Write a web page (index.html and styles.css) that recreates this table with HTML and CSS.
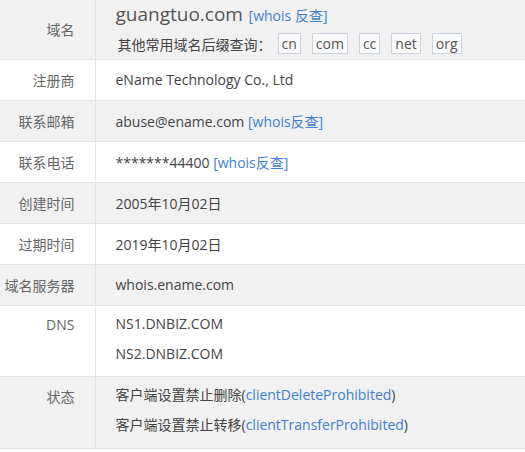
FILE: index.html
```html
<!DOCTYPE html>
<html lang="zh-CN">
<head>
  <meta charset="UTF-8">
  <title>guangtuo.com whois</title>
  <link rel="stylesheet" href="styles.css">
</head>
<body>
  <table class="whois">
    <tr class="row-gray row-domain">
      <th>域名</th>
      <td>
        <div class="domain-line">
          <span class="domain-name">guangtuo.com</span>
          <a class="link" href="#">[whois 反查]</a>
        </div>
        <div class="suffix-line">
          <span class="suffix-label">其他常用域名后缀查询：</span>
          <a class="suffix" href="#">cn</a>
          <a class="suffix" href="#">com</a>
          <a class="suffix" href="#">cc</a>
          <a class="suffix" href="#">net</a>
          <a class="suffix" href="#">org</a>
        </div>
      </td>
    </tr>
    <tr>
      <th>注册商</th>
      <td>eName Technology Co., Ltd</td>
    </tr>
    <tr class="row-gray">
      <th>联系邮箱</th>
      <td>abuse@ename.com <a class="link" href="#">[whois反查]</a></td>
    </tr>
    <tr>
      <th>联系电话</th>
      <td>*******44400 <a class="link" href="#">[whois反查]</a></td>
    </tr>
    <tr class="row-gray">
      <th>创建时间</th>
      <td>2005年10月02日</td>
    </tr>
    <tr>
      <th>过期时间</th>
      <td>2019年10月02日</td>
    </tr>
    <tr class="row-gray">
      <th>域名服务器</th>
      <td>whois.ename.com</td>
    </tr>
    <tr class="row-multi">
      <th>DNS</th>
      <td>
        <div class="line">NS1.DNBIZ.COM</div>
        <div class="line">NS2.DNBIZ.COM</div>
      </td>
    </tr>
    <tr class="row-gray row-multi row-last">
      <th>状态</th>
      <td>
        <div class="line">客户端设置禁止删除(<a class="link" href="#">clientDeleteProhibited</a>)</div>
        <div class="line">客户端设置禁止转移(<a class="link" href="#">clientTransferProhibited</a>)</div>
      </td>
    </tr>
  </table>
</body>
</html>
```

FILE: styles.css
```css
* {
  margin: 0;
  padding: 0;
  box-sizing: border-box;
}

body {
  background: #fff;
  font-family: "Open Sans", "Noto Sans CJK SC", sans-serif;
  font-size: 14px;
  color: #444;
}

.whois {
  width: 525px;
  border-collapse: collapse;
}

.whois tr {
  border-bottom: 1px solid #e3e3e3;
}

.whois tr.row-gray {
  background: #f1f1f1;
}

.whois th {
  width: 95px;
  height: 41px;
  padding-right: 20px;
  text-align: right;
  font-weight: normal;
  color: #666;
  border-right: 1px solid #e3e3e3;
  vertical-align: middle;
}

.whois td {
  padding-left: 20px;
  vertical-align: middle;
}

.row-domain th,
.row-domain td {
  height: 59px;
}

.row-domain td {
  vertical-align: top;
  padding-top: 2px;
}

.row-multi th {
  vertical-align: top;
  padding-top: 9px;
}

.row-multi td {
  height: 71px;
  vertical-align: top;
  padding-top: 8px;
}

.row-last td {
  height: 72px;
}

.line {
  height: 30px;
  line-height: 20px;
}

.domain-line {
  height: 26px;
  line-height: 24px;
}

.domain-name {
  font-size: 19px;
  color: #555;
  margin-right: 2px;
}

.link {
  color: #4080cf;
  text-decoration: none;
}

.suffix-line {
  display: flex;
  align-items: center;
  gap: 11px;
  margin-top: 5px;
}

.suffix-label {
  margin-left: 2px;
  margin-right: -5px;
}

.suffix {
  display: inline-block;
  height: 21px;
  line-height: 19px;
  padding: 0 3px;
  border: 1px solid #c8d3df;
  background: #fafafa;
  color: #555;
  text-decoration: none;
}
```
